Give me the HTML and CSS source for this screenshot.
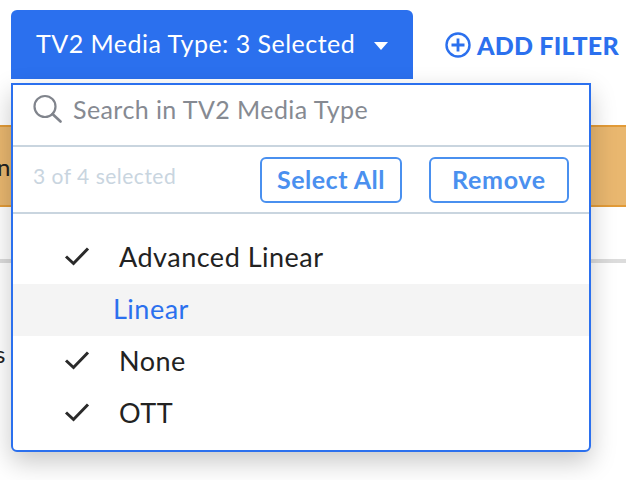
FILE: index.html
```html
<!DOCTYPE html>
<html lang="en">
<head>
<meta charset="utf-8">
<title>Filter</title>
<link rel="stylesheet" href="styles.css">
</head>
<body>
<div class="page">
  <header class="filters">
    <button class="filter-btn"><span>TV2 Media Type: 3 Selected</span><span class="caret"></span></button>
    <a class="add-filter">
      <svg class="add-icon" width="26" height="26" viewBox="0 0 26 26"><circle cx="13" cy="13" r="11.5" fill="none" stroke="#2b70ee" stroke-width="2.4"/><path d="M13 6.5v13M6.5 13h13" fill="none" stroke="#2b70ee" stroke-width="2.8"/></svg>
      <span>ADD FILTER</span>
    </a>
  </header>
  <div class="banner"><span class="banner-text">n</span></div>
  <div class="rule"></div>
  <div class="peek">s</div>

  <div class="dropdown">
    <div class="search">
      <svg width="30" height="30" viewBox="0 0 30 30"><circle cx="13" cy="12.5" r="10.5" fill="none" stroke="#80848c" stroke-width="2.2"/><path d="M20.5 20l8 7.5" fill="none" stroke="#80848c" stroke-width="2.6" stroke-linecap="round"/></svg>
      <span class="placeholder">Search in TV2 Media Type</span>
    </div>
    <div class="actions">
      <span class="count">3 of 4 selected</span>
      <button class="act act-all">Select All</button>
      <button class="act act-remove">Remove</button>
    </div>
    <ul class="options">
      <li class="option"><svg class="check" width="26" height="20" viewBox="0 0 26 20"><path d="M2 10.5l7.5 7L24 2.5" fill="none" stroke="#2a2a2a" stroke-width="3"/></svg><span>Advanced Linear</span></li>
      <li class="option hover"><span>Linear</span></li>
      <li class="option"><svg class="check" width="26" height="20" viewBox="0 0 26 20"><path d="M2 10.5l7.5 7L24 2.5" fill="none" stroke="#2a2a2a" stroke-width="3"/></svg><span>None</span></li>
      <li class="option"><svg class="check" width="26" height="20" viewBox="0 0 26 20"><path d="M2 10.5l7.5 7L24 2.5" fill="none" stroke="#2a2a2a" stroke-width="3"/></svg><span>OTT</span></li>
    </ul>
  </div>
</div>
</body>
</html>
```
FILE: styles.css
```css
* { box-sizing: border-box; }
html, body { margin: 0; padding: 0; background: #fff; }
body { font-family: "Lato", "Open Sans", sans-serif; }
.page { position: relative; width: 626px; height: 480px; overflow: hidden; }
.filters { display: flex; align-items: center; padding: 10px 0 0 11px; }
.filter-btn {
  display: flex; align-items: center; justify-content: space-between;
  width: 402px; height: 69px; padding: 0 25px 4px;
  background: #2b70ee; color: #fff; border: 0; border-radius: 6px 6px 0 0;
  font: 400 25px "Lato", sans-serif; letter-spacing: .48px;
}
.caret { width: 0; height: 0; border: 7.5px solid transparent; border-top: 8px solid #fff; border-bottom: 0; margin-top: 7px; }
.add-filter { display: flex; align-items: center; gap: 6px; margin-left: 32px; color: #2b70ee; font-weight: 900; font-size: 25px; letter-spacing: .2px; white-space: nowrap; margin-top: 1px; }
.add-icon { flex: none; }
.banner {
  margin-top: 46px; height: 82px; display: flex; align-items: center;
  background: #e9b76f; border-top: 2px solid #e29b38; border-bottom: 2px solid #e29b38;
  font-size: 24px; color: #222;
}
.banner-text { margin-left: -3px; }
.rule { margin-top: 52px; height: 4px; background: #dcdcdc; }
.peek { margin-top: 76px; margin-left: -5px; font-size: 24px; color: #222; }
.dropdown {
  position: absolute; left: 11px; top: 83px; width: 580px; height: 369px;
  background: #fff; border: 2px solid #2b70ee; border-radius: 0 0 6px 6px;
  box-shadow: 0 10px 26px rgba(0,0,0,.22);
}
.search { display: flex; align-items: center; gap: 11px; height: 62px; padding: 0 20px 12px 19px; border-bottom: 2px solid #c9d5df; }
.placeholder { font-size: 25px; color: #868a92; letter-spacing: .42px; }
.actions { display: flex; align-items: center; height: 67px; padding: 0 20px; border-bottom: 2px solid #c9d5df; }
.count { font-size: 21px; color: #c9d5df; letter-spacing: .5px; margin-right: auto; padding-bottom: 8px; }
.act {
  height: 46px; background: #fff; border: 2px solid #4a90ef; border-radius: 6px;
  color: #4a90ef; font: 700 25px "Lato", sans-serif; padding: 0 0 2px;
}
.act-all { width: 142px; margin-right: 27px; letter-spacing: .5px; }
.act-remove { width: 140px; letter-spacing: .7px; }
.options { list-style: none; margin: 0; padding: 18px 0 0; }
.option { display: flex; align-items: center; height: 52px; padding: 0 0 4px 51px; gap: 29px; font-size: 27px; letter-spacing: .5px; color: #222; }
.hover { background: #f4f4f4; color: #2b70ee; padding-left: 100px; }
```
